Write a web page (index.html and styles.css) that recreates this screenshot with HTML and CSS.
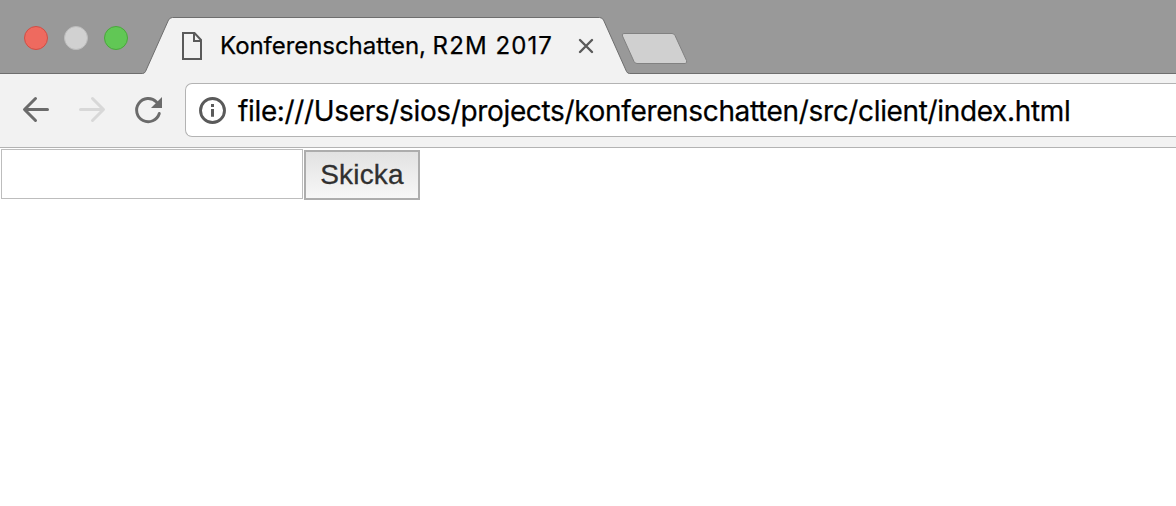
FILE: index.html
```html
<!DOCTYPE html>
<html lang="sv">
<head>
<meta charset="utf-8">
<title>Konferenschatten, R2M 2017</title>
<link rel="stylesheet" href="styles.css">
</head>
<body>
<header class="tab-strip">
  <div class="window-controls">
    <span class="control close"></span><span class="control minimize"></span><span class="control maximize"></span>
  </div>
  <div class="tab">
    <svg class="tab-shape" width="488" height="58" viewBox="0 0 488 58">
      <path d="M0 58V57.5H.5Q2.500 57.5 3.500 55.5L26.500 4Q28 1.500 30.500 1.500H457.500Q460 1.500 461.500 4L484.500 55.500Q485.500 57.500 487.500 57.500H488V58Z" fill="#f2f2f2"/>
      <path d="M0 57.5H.5Q2.500 57.5 3.500 55.500L26.500 4Q28 1.500 30.500 1.500H457.500Q460 1.500 461.500 4L484.500 55.500Q485.500 57.500 487.500 57.500H488" fill="none" stroke="#6e6e6e"/>
    </svg>
    <svg class="page-icon" width="22" height="30" viewBox="0 0 22 30"><path d="M2 2H13.500L20 9V28H2ZM13 2V10H20" fill="none" stroke="#5a5a5a" stroke-width="2"/></svg>
    <span class="tab-title">Konferenschatten, <span class="tab-title-code">R2M 2017</span></span>
    <svg class="tab-close" width="16" height="16" viewBox="0 0 16 16"><path d="M2 2L14 14M14 2L2 14" stroke="#5a5a5a" stroke-width="2.400" stroke-linecap="round"/></svg>
  </div>
  <svg class="new-tab" width="68" height="34" viewBox="0 0 68 34"><path d="M4 2.500H52Q54 2.500 55 4.500L66.500 29.500Q67.500 32.500 65 32.500H17Q15 32.500 14 30.500L2.500 5Q1.500 2.500 4 2.500Z" fill="#d0d0d0" stroke="#818181"/></svg>
</header>
<nav class="toolbar">
  <svg class="back" width="28" height="28" viewBox="0 0 28 28"><path d="M25.500 14.500H3M13.500 3.500L2.500 14.500L13.500 25.500" fill="none" stroke="#6b6b6b" stroke-width="3" stroke-linecap="round" stroke-linejoin="round"/></svg>
  <svg class="forward" width="28" height="28" viewBox="0 0 28 28"><path d="M2.500 14.500H25M14.500 3.500L25.500 14.500L14.500 25.500" fill="none" stroke="#d8d8d8" stroke-width="3" stroke-linecap="round" stroke-linejoin="round"/></svg>
  <svg class="reload" width="30" height="30" viewBox="0 0 30 30"><path d="M25.300 18.500A11.600 11.600 0 1 1 22.500 7" fill="none" stroke="#6b6b6b" stroke-width="2.900" stroke-linecap="round"/><path d="M28 2V13H17Z" fill="#6b6b6b"/></svg>
  <div class="address">
    <svg class="info" width="28" height="28" viewBox="0 0 28 28"><circle cx="14.500" cy="14.500" r="12" fill="none" stroke="#5a5a5a" stroke-width="2.900"/><path d="M14.500 8V11M14.500 13V20.700" stroke="#5a5a5a" stroke-width="3"/></svg>
    <span class="url">file:///Users/sios/projects/konferenschatten/src/client/index.html</span>
  </div>
</nav>
<main class="page">
  <input class="message" type="text" aria-label="Meddelande">
  <button class="send" type="button">Skicka</button>
</main>
</body>
</html>
```
FILE: styles.css
```css
* { box-sizing: border-box; }
body { margin: 0; background: #fff; height: 506px; overflow: hidden; font-family: Inter, sans-serif; color: #000; }
svg { display: block; flex: none; }
.tab-strip { height: 74px; display: flex; background: #999; border-bottom: 1px solid #6e6e6e; }
.window-controls { display: flex; gap: 16px; padding: 26px 0 0 24px; width: 142px; flex: none; }
.control { width: 24px; height: 24px; border-radius: 50%; border: 1px solid; }
.close { background: #ee6a5f; border-color: #d04e45; }
.minimize { background: #d1d1d1; border-color: #bcbcbc; }
.maximize { background: #61c755; border-color: #4aa73c; }
.tab { position: relative; width: 488px; height: 58px; margin-top: 16px; display: flex; flex: none; align-items: center; padding-left: 39px; }
.tab-shape { position: absolute; left: 0; top: 0; }
.page-icon, .tab-title, .tab-close { position: relative; }
.page-icon { margin-top: 2px; }
.tab-title { width: 334px; margin: 2px 0 0 17px; font-size: 24px; line-height: 30px; letter-spacing: -0.05px; white-space: nowrap; -webkit-text-stroke: 0.25px #000; }
.tab-title-code { letter-spacing: 1.1px; }
.tab-close { margin-left: 24px; margin-top: 1px; }
.new-tab { margin: 31px 0 0 -10px; }
.toolbar { height: 74px; display: flex; background: #f2f2f2; border-bottom: 1px solid #b3b3b3; padding: 9px 0 0 22px; }
.back { margin-top: 12px; }
.forward { margin: 12px 0 0 28px; }
.reload { margin: 12px 0 0 28px; }
.address { flex: 1; height: 54px; margin-left: 21px; display: flex; align-items: center; background: #fff; border: 1px solid #b3b3b3; border-right: 0; border-radius: 7px 0 0 7px; padding-left: 12px; }
.url { margin: 2px 0 0 12px; font-size: 28px; line-height: 36px; letter-spacing: -0.35px; white-space: nowrap; -webkit-text-stroke: 0.25px #000; }
.page { display: flex; align-items: flex-start; padding: 1px 0 0 1px; gap: 1px; }
.message { width: 302px; height: 50px; margin: 0; border: 1px solid #bdbdbd; border-radius: 0; background: #fff; outline: none; font: 28px "Liberation Sans", Arial, sans-serif; }
.send { width: 116px; height: 50px; margin: 1px 0 0; padding: 0; border: 2px solid #adadad; border-radius: 0; background: linear-gradient(#e2e2e2, #f7f7f7); color: #303030; font: 28px "Liberation Sans", Arial, sans-serif; letter-spacing: 0.2px; -webkit-text-stroke: 0.3px #303030; }
```
